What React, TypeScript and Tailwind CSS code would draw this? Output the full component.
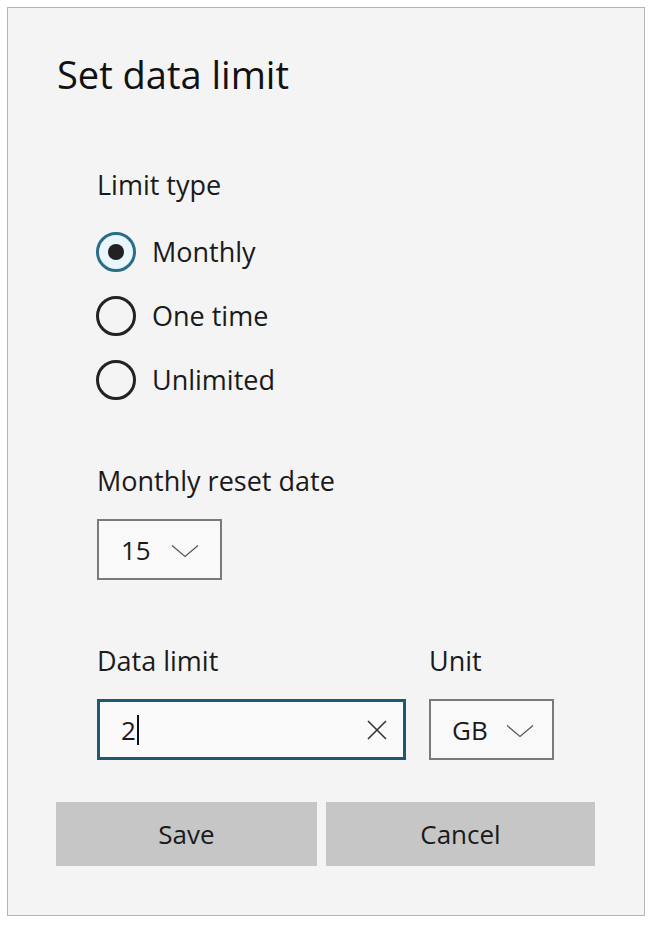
import React from "react";

const font = { fontFamily: '"Open Sans", "Noto Sans", sans-serif' };

function Chevron() {
  return (
    <svg width="28" height="14" viewBox="0 0 28 14" fill="none">
      <polyline points="1,1.5 14,12.5 27,1.5" stroke="#555" strokeWidth="1.2" fill="none" />
    </svg>
  );
}

function Radio({ checked, label }: { checked?: boolean; label: string }) {
  return (
    <div className="flex h-[64px] items-center">
      {checked ? (
        <div className="flex h-[40px] w-[40px] items-center justify-center rounded-full border-[3px] border-[#2c6e88] bg-[#e9f6fb]">
          <div className="h-[16px] w-[16px] rounded-full bg-[#222]" />
        </div>
      ) : (
        <div className="h-[40px] w-[40px] rounded-full border-[3px] border-[#222]" />
      )}
      <span className="ml-[16px] text-[27px] leading-[36px] text-[#1a1a1a]">{label}</span>
    </div>
  );
}

export default function App() {
  return (
    <div className="h-[926px] w-[654px] bg-white pl-[7px] pt-[7px]" style={font}>
      <div className="flex h-[909px] w-[638px] flex-col border border-[#b4b4b4] bg-[#f4f4f4]">
        <div className="ml-[49px] mt-[40px] text-[38px] leading-[52px] text-[#111]">Set data limit</div>
        <div className="flex flex-col pl-[89px]">
          <div className="mt-[67px] text-[27px] leading-[36px] text-[#1a1a1a]">Limit type</div>
          <div className="-ml-[1px] mt-[17px] flex flex-col">
            <Radio checked label="Monthly" />
            <Radio label="One time" />
            <Radio label="Unlimited" />
          </div>
          <div className="mt-[51px] text-[27px] leading-[36px] text-[#1a1a1a]">Monthly reset date</div>
          <div className="mt-[20px] flex h-[61px] w-[125px] items-center border-2 border-[#7a7a7a] bg-[#f9f9f9] pl-[22px]">
            <span className="text-[26px] leading-[36px] text-[#1a1a1a]">15</span>
            <span className="ml-[20px] mt-[2px]"><Chevron /></span>
          </div>
          <div className="mt-[63px] flex">
            <div className="w-[332px] text-[27px] leading-[36px] text-[#1a1a1a]">Data limit</div>
            <div className="text-[27px] leading-[36px] text-[#1a1a1a]">Unit</div>
          </div>
          <div className="mt-[20px] flex">
            <div className="flex h-[61px] w-[309px] items-center border-[3px] border-[#1d5a72] bg-[#fafafa] pl-[21px] pr-[16px]">
              <span className="text-[26px] leading-[36px] text-[#1a1a1a]">2</span>
              <span className="ml-[1px] h-[30px] w-[2px] bg-[#111]" />
              <span className="flex-1" />
              <svg width="20" height="20" viewBox="0 0 20 20">
                <path d="M1 1 L19 19 M19 1 L1 19" stroke="#333" strokeWidth="1.6" />
              </svg>
            </div>
            <div className="ml-[23px] flex h-[61px] w-[125px] items-center border-2 border-[#7a7a7a] bg-[#f9f9f9] pl-[21px]">
              <span className="text-[26px] leading-[36px] text-[#1a1a1a]">GB</span>
              <span className="ml-[18px] mt-[2px]"><Chevron /></span>
            </div>
          </div>
        </div>
        <div className="ml-[48px] mt-[42px] flex gap-[9px]">
          <div className="flex h-[64px] w-[261px] items-center justify-center bg-[#c6c6c6] text-[26px] text-[#1a1a1a]">Save</div>
          <div className="flex h-[64px] w-[269px] items-center justify-center bg-[#c6c6c6] text-[26px] text-[#1a1a1a]">Cancel</div>
        </div>
      </div>
    </div>
  );
}
